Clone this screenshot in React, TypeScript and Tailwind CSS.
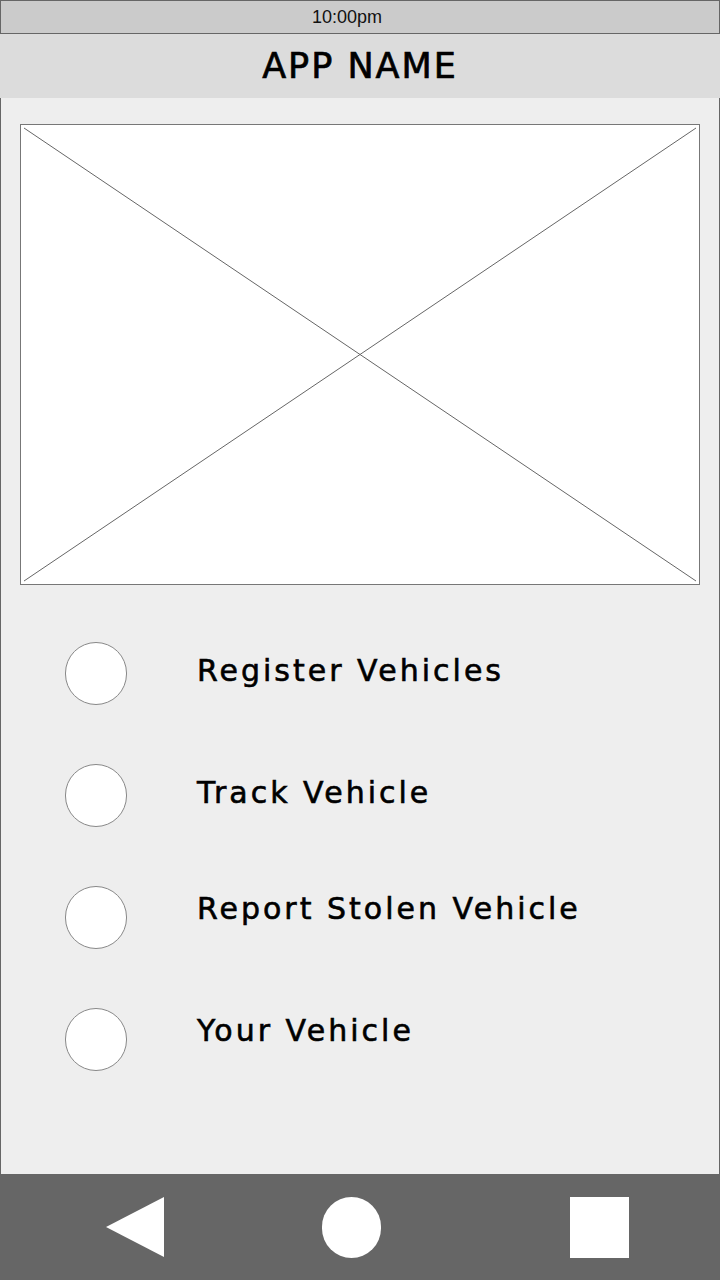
const items = [
  { label: "Register Vehicles", text: "pb-[4px]" },
  { label: "Track Vehicle", text: "pb-[4px]" },
  { label: "Report Stolen Vehicle", text: "pb-[16px]" },
  { label: "Your Vehicle", text: "pb-[16px]" },
];

function NavBar() {
  return (
    <nav className="h-[106px] bg-[#666666] flex items-center pl-[106px]">
      <svg width="58" height="62" viewBox="0 0 58 62">
        <polygon points="58,1 58,61 0,31" fill="#ffffff" />
      </svg>
      <div className="ml-[158px] w-[59px] h-[61px] rounded-full bg-white" />
      <div className="ml-[189px] w-[59px] h-[61px] bg-white" />
    </nav>
  );
}

export default function App() {
  return (
    <div
      className="w-[720px] h-[1280px] flex flex-col bg-[#eeeeee] text-black"
      style={{ fontFamily: '"DejaVu Sans", "Noto Sans", sans-serif' }}
    >
      {/* Status bar */}
      <div className="h-[34px] bg-[#cbcbcb] border border-[#666666] flex items-center justify-center pr-[26px]">
        <span className="text-[18px] leading-none font-['Liberation_Sans',Arial,sans-serif] text-[#111]">
          10:00pm
        </span>
      </div>

      {/* Title */}
      <header className="h-[64px] bg-[#dcdcdc] flex items-center justify-center">
        <h1 className="text-[35px] leading-none tracking-[2px] [-webkit-text-stroke:0.7px_#000]">
          APP NAME
        </h1>
      </header>

      {/* Content */}
      <main className="flex-1 border-x border-[#666666] px-[19px] pt-[26px]">
        <div className="relative h-[461px] bg-white border border-[#777777]">
          <svg
            className="absolute inset-0 w-full h-full"
            viewBox="0 0 678 459"
            preserveAspectRatio="none"
          >
            <line x1="3" y1="3" x2="675" y2="456" stroke="#666666" strokeWidth="1" />
            <line x1="675" y1="3" x2="3" y2="456" stroke="#666666" strokeWidth="1" />
          </svg>
        </div>

        <ul className="mt-[27px] flex flex-col">
          {items.map((item) => (
            <li key={item.label} className="h-[122px] flex items-center pl-[45px]">
              <div className="w-[62px] h-[63px] rounded-full bg-white border border-[#888888] shrink-0" />
              <span
                className={`ml-[70px] text-[30px] leading-none tracking-[3px] [-webkit-text-stroke:0.6px_#000] ${item.text}`}
              >
                {item.label}
              </span>
            </li>
          ))}
        </ul>
      </main>

      <NavBar />
    </div>
  );
}
